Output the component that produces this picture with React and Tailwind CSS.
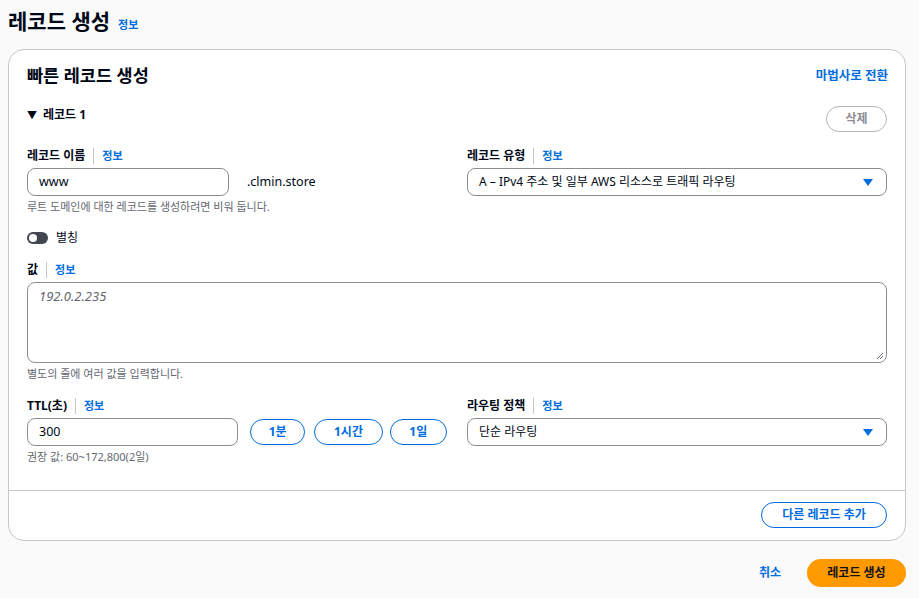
const font = { fontFamily: '"Noto Sans", "Noto Sans CJK KR", sans-serif' };

const Info = () => (
  <span className="text-[11px] leading-[16px] font-bold text-[#006ce0]">정보</span>
);

const Label = ({ children }) => (
  <div className="flex items-center h-[16px] mb-[4px]">
    <span className="text-[12px] leading-[16px] font-bold text-[#000716]">{children}</span>
    <span className="mx-[8px] h-[16px] w-px bg-[#c6c6cd]" />
    <Info />
  </div>
);

const Caret = () => (
  <svg width="12" height="9" viewBox="0 0 12 9">
    <path d="M1 1h10L6 8z" fill="#006ce0" />
  </svg>
);

const Select = ({ value }) => (
  <div className="flex items-center justify-between h-[28px] rounded-lg border border-[#8c8c94] bg-white pl-[11px] pr-[12px]">
    <span className="text-[12px] text-[#000716]">{value}</span>
    <Caret />
  </div>
);

const PillButton = ({ children, className = '' }) => (
  <button className={`h-[26px] rounded-full border border-[#006ce0] text-[12px] font-bold text-[#006ce0] bg-white ${className}`}>
    {children}
  </button>
);

const Hint = ({ children }) => (
  <p className="mt-[3px] text-[11px] leading-[15px] text-[#656871]">{children}</p>
);

const App = () => {
  return (
    <div className="min-h-[598px] bg-[#fafafa]" style={font}>
      <div className="pl-[8px] pr-[13px]">
        <div className="flex items-baseline h-[49px] pt-[6px]">
          <h1 className="text-[21px] font-bold text-[#000716]">레코드 생성</h1>
          <span className="ml-[8px] text-[11px] font-bold text-[#006ce0]">정보</span>
        </div>

        <div className="rounded-2xl border border-[#c6c6cd] bg-white">
          <div className="px-[18px] pt-[12px]">
            <div className="flex items-center justify-between h-[26px]">
              <h2 className="text-[17.5px] font-bold text-[#000716]">빠른 레코드 생성</h2>
              <span className="text-[12.5px] font-bold text-[#006ce0] mr-[-1px] mt-[2px]">마법사로 전환</span>
            </div>

            <div className="flex items-start justify-between mt-[17px]">
              <div className="flex items-center gap-[6px] mt-[1px]">
                <span className="text-[10px] text-[#000716]">▼</span>
                <span className="text-[12px] font-bold text-[#000716]">레코드 1</span>
              </div>
              <button className="h-[26px] w-[61px] mt-[1px] rounded-full border border-[#b4b4bb] text-[12px] font-bold text-[#8c8c94] bg-white">
                삭제
              </button>
            </div>

            <div className="grid grid-cols-2 gap-[20px] mt-[16px]">
              <div>
                <Label>레코드 이름</Label>
                <div className="flex items-center">
                  <div className="flex items-center w-[202px] h-[28px] rounded-lg border border-[#8c8c94] px-[11px] text-[12.5px] text-[#000716]">
                    www
                  </div>
                  <span className="ml-[18px] text-[12.5px] text-[#000716]">.clmin.store</span>
                </div>
                <Hint>루트 도메인에 대한 레코드를 생성하려면 비워 둡니다.</Hint>
              </div>
              <div>
                <Label>레코드 유형</Label>
                <Select value="A – IPv4 주소 및 일부 AWS 리소스로 트래픽 라우팅" />
              </div>
            </div>

            <div className="flex items-center mt-[16px] h-[16px]">
              <span className="relative inline-block w-[21px] h-[12px] rounded-full bg-[#424650]">
                <span className="absolute left-[2px] top-[2px] w-[8px] h-[8px] rounded-full bg-white" />
              </span>
              <span className="ml-[8px] text-[12px] text-[#000716]">별칭</span>
            </div>

            <div className="mt-[16px]">
              <Label>값</Label>
              <div className="relative h-[81px] rounded-lg border border-[#8c8c94] px-[11px]">
                <span className="text-[13px] leading-[20px] italic text-[#656871]">192.0.2.235</span>
                <svg className="absolute right-[2px] bottom-[2px]" width="8" height="8" viewBox="0 0 8 8">
                  <path d="M7 1L1 7M7 4L4 7" stroke="#656871" strokeWidth="1" />
                </svg>
              </div>
              <Hint>별도의 줄에 여러 값을 입력합니다.</Hint>
            </div>

            <div className="grid grid-cols-2 gap-[20px] mt-[17px]">
              <div>
                <Label>TTL(초)</Label>
                <div className="flex items-center">
                  <div className="flex items-center w-[213px] h-[28px] rounded-lg border border-[#8c8c94] px-[11px] text-[12.5px] text-[#000716]">
                    300
                  </div>
                  <PillButton className="ml-[12px] w-[56px]">1분</PillButton>
                  <PillButton className="ml-[9px] w-[69px]">1시간</PillButton>
                  <PillButton className="ml-[7px] w-[58px]">1일</PillButton>
                </div>
                <Hint>권장 값: 60~172,800(2일)</Hint>
              </div>
              <div>
                <Label>라우팅 정책</Label>
                <Select value="단순 라우팅" />
              </div>
            </div>
          </div>

          <div className="mt-[26px] border-t border-[#c6c6cd]" />
          <div className="flex justify-end px-[18px] pt-[11px] pb-[12px]">
            <PillButton className="w-[126px]">다른 레코드 추가</PillButton>
          </div>
        </div>

        <div className="flex items-center justify-end mt-[18px]">
          <span className="text-[12px] font-bold text-[#006ce0]">취소</span>
          <button className="ml-[26px] h-[28px] w-[99px] rounded-full bg-[#ff9900] text-[12px] font-bold text-[#0f141a]">
            레코드 생성
          </button>
        </div>
      </div>
    </div>
  );
};

export default App;
